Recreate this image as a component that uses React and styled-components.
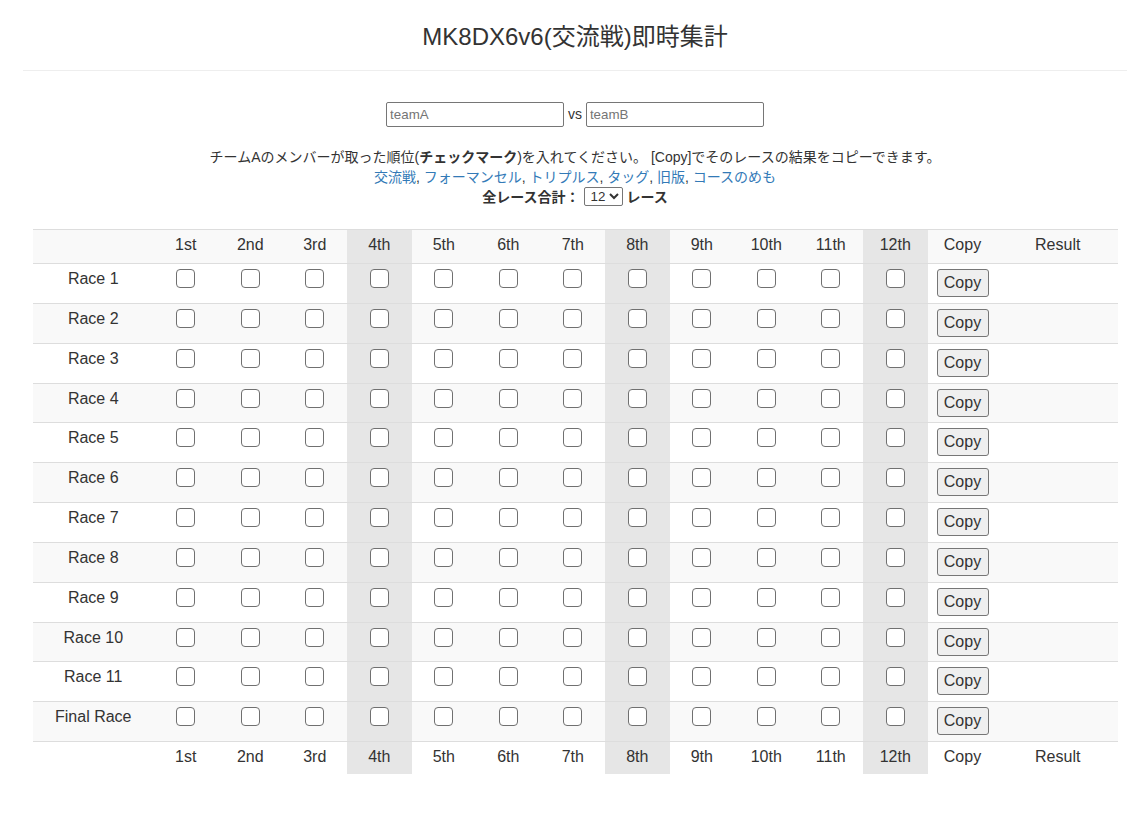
import React from "react";
import styled, { createGlobalStyle } from "styled-components";

const places = ["1st", "2nd", "3rd", "4th", "5th", "6th", "7th", "8th", "9th", "10th", "11th", "12th"];
const races = ["Race 1", "Race 2", "Race 3", "Race 4", "Race 5", "Race 6", "Race 7", "Race 8", "Race 9", "Race 10", "Race 11", "Final Race"];
const links = ["交流戦", "フォーマンセル", "トリプルス", "タッグ", "旧版", "コースのめも"];

// every 4th place column is shaded
const isShaded = (i) => (i + 1) % 4 === 0;

export default function App() {
  return <Page>
    <GlobalStyle />
    <Title>MK8DX6v6(交流戦)即時集計</Title>
    <Divider />
    <TeamForm>
      <TeamInput placeholder="teamA" /> vs <TeamInput placeholder="teamB" />
    </TeamForm>
    <Info>
      <div>
        チームAのメンバーが取った順位(<b>チェックマーク</b>)を入れてください。 [Copy]でそのレースの結果をコピーできます。
      </div>
      <div>
        {links.map((l, i) => <React.Fragment key={l}>
          <Link href="#">{l}</Link>{i < links.length - 1 ? ", " : ""}
        </React.Fragment>)}
      </div>
      <Total>
        全レース合計： <RaceSelect defaultValue="12">
          {races.map((r, i) => <option key={r}>{i + 1}</option>)}
        </RaceSelect> レース
      </Total>
    </Info>
    <ScoreTable>
      <colgroup>
        <col style={{ width: 120.5 }} />
        {places.map(p => <col key={p} style={{ width: 64.5 }} />)}
        <col style={{ width: 70 }} />
        <col style={{ width: 120.5 }} />
      </colgroup>
      <thead>
        <Row $striped $kind="head">
          <Cell />
          {places.map((p, i) => <Cell key={p} $shade={isShaded(i)}>{p}</Cell>)}
          <Cell>Copy</Cell>
          <Cell>Result</Cell>
        </Row>
      </thead>
      <tbody>
        {races.map((r, ri) => <Row key={r} $striped={ri % 2 === 1}>
          <Cell>{r}</Cell>
          {places.map((p, i) => <Cell key={p} $shade={isShaded(i)}>
            <CheckBox type="checkbox" />
          </Cell>)}
          <Cell><CopyButton>Copy</CopyButton></Cell>
          <Cell />
        </Row>)}
      </tbody>
      <tfoot>
        <Row $kind="foot">
          <Cell />
          {places.map((p, i) => <Cell key={p} $shade={isShaded(i)}>{p}</Cell>)}
          <Cell>Copy</Cell>
          <Cell>Result</Cell>
        </Row>
      </tfoot>
    </ScoreTable>
  </Page>;
}

const GlobalStyle = createGlobalStyle`
  body {
    margin: 0;
    background: #fff;
    color: #333;
    font-family: "Liberation Sans", Arial, "Noto Sans CJK JP", sans-serif;
    font-size: 14px;
    line-height: 20px;
  }
`;

const Page = styled.div`
  padding: 0 5px 40px 23px;
`;

const Title = styled.h3`
  margin: 24px 0 20px;
  font-size: 24px;
  font-weight: normal;
  line-height: 26px;
  text-align: center;
  color: #333;
`;

const Divider = styled.hr`
  margin: 0;
  border: 0;
  border-top: 1px solid #eee;
`;

const TeamForm = styled.div`
  margin-top: 31px;
  text-align: center;
  font-size: 14px;
  line-height: 25px;
`;

const TeamInput = styled.input`
  box-sizing: border-box;
  width: 178px;
  height: 25px;
  vertical-align: top;
  padding: 1px 3px;
  border: 1px solid #767676;
  border-radius: 2px;
  font-family: "Liberation Sans", Arial, sans-serif;
  font-size: 13.33px;
  color: #333;
  &::placeholder { color: #757575; }
`;

const Info = styled.div`
  margin-top: 20px;
  text-align: center;
  font-size: 14px;
  line-height: 20px;
`;

const Link = styled.a`
  color: #337ab7;
  text-decoration: none;
`;

const Total = styled.div`
  font-weight: bold;
`;

const RaceSelect = styled.select`
  box-sizing: border-box;
  height: 19px;
  width: 39px;
  padding: 0 0 0 2px;
  border: 1px solid #767676;
  border-radius: 2px;
  font-family: "Liberation Sans", Arial, sans-serif;
  font-size: 13.33px;
  font-weight: normal;
  color: #333;
  background: #fff;
  vertical-align: top;
`;

const ScoreTable = styled.table`
  width: 1085px;
  margin: 22px 9px 0 10px;
  table-layout: fixed;
  border-collapse: collapse;
  font-size: 16px;
  line-height: 20px;
`;

const rowPadding = {
  head: "5px 4px 8px",
  foot: "5px 4px 7px",
  body: "5px 4px 5.85px",
};

const Row = styled.tr`
  background: ${p => p.$striped ? "#f9f9f9" : "#fff"};
  & > td {
    padding: ${p => rowPadding[p.$kind || "body"]};
  }
`;

const Cell = styled.td`
  text-align: center;
  vertical-align: top;
  border-top: 1px solid #ddd;
  background: ${p => p.$shade ? "#e6e6e6" : "transparent"};
  color: #333;
`;

const CheckBox = styled.input`
  appearance: none;
  display: block;
  box-sizing: border-box;
  width: 19px;
  height: 19px;
  margin: 0 auto;
  border: 1.5px solid #707070;
  border-radius: 4px;
  background: #fff;
  &:checked { background: #0075ff; border-color: #0075ff; }
`;

const CopyButton = styled.button`
  box-sizing: border-box;
  width: 52px;
  height: 28px;
  padding: 1px 6px;
  border: 1px solid #767676;
  border-radius: 3px;
  background: #efefef;
  font-family: "Liberation Sans", Arial, sans-serif;
  font-size: 16px;
  color: #333;
`;
